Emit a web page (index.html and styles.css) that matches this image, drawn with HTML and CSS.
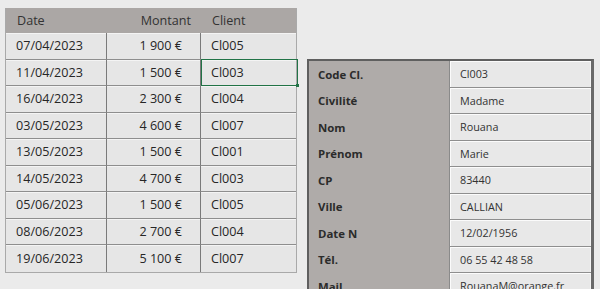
FILE: index.html
```html
<!DOCTYPE html>
<html lang="fr">
<head>
<meta charset="utf-8">
<title>Ventes et fiche client</title>
<link rel="stylesheet" href="styles.css">
</head>
<body>
<div class="sheet">
  <div class="sales">
    <div class="hd">Date</div><div class="hd num">Montant</div><div class="hd">Client</div>
    <div class="c">07/04/2023</div><div class="c num">1 900 €</div><div class="c">Cl005</div>
    <div class="c">11/04/2023</div><div class="c num">1 500 €</div><div class="c selected">Cl003</div>
    <div class="c">16/04/2023</div><div class="c num">2 300 €</div><div class="c">Cl004</div>
    <div class="c">03/05/2023</div><div class="c num">4 600 €</div><div class="c">Cl007</div>
    <div class="c">13/05/2023</div><div class="c num">1 500 €</div><div class="c">Cl001</div>
    <div class="c">14/05/2023</div><div class="c num">4 700 €</div><div class="c">Cl003</div>
    <div class="c">05/06/2023</div><div class="c num">1 500 €</div><div class="c">Cl005</div>
    <div class="c">08/06/2023</div><div class="c num">2 700 €</div><div class="c">Cl004</div>
    <div class="c">19/06/2023</div><div class="c num">5 100 €</div><div class="c">Cl007</div>
  </div>

  <div class="card">
    <div class="lbl">Code Cl.</div><div class="val">Cl003</div>
    <div class="lbl">Civilité</div><div class="val">Madame</div>
    <div class="lbl">Nom</div><div class="val">Rouana</div>
    <div class="lbl">Prénom</div><div class="val">Marie</div>
    <div class="lbl">CP</div><div class="val">83440</div>
    <div class="lbl">Ville</div><div class="val">CALLIAN</div>
    <div class="lbl">Date N</div><div class="val">12/02/1956</div>
    <div class="lbl">Tél.</div><div class="val">06 55 42 48 58</div>
    <div class="lbl">Mail</div><div class="val">RouanaM@orange.fr</div>
  </div>
</div>
</body>
</html>
```
FILE: styles.css
```css
html, body {
  margin: 0;
  padding: 0;
  background: #ebebeb;
  height: 289px;
  overflow: hidden;
}

body {
  font-family: "Open Sans", "Liberation Sans", sans-serif;
  color: #262626;
}

.sheet {
  display: flex;
  align-items: flex-start;
  padding: 8px 0 0 5px;
}

/* sales list */
.sales {
  display: grid;
  grid-template-columns: 101px 94px 95px;
  grid-template-rows: 25px repeat(9, 26.5px);
  border: 1px solid #a9a9a9;
  border-top: none;
  background: #e6e6e6;
  font-size: 12.6px;
}

.sales .hd {
  background: #aba7a5;
  color: #333;
  display: flex;
  align-items: center;
  padding-left: 11px;
}

.sales .hd.num {
  justify-content: flex-end;
  padding: 0 10px 0 0;
}

.sales .c {
  display: flex;
  align-items: center;
  padding-left: 10px;
  border-bottom: 1px solid #8e8e8e;
  box-shadow: inset 0 1px 0 #f4f4f4;
}

.sales .c:nth-child(3n+1),
.sales .c:nth-child(3n+2) {
  border-right: 1px solid #7a7a7a;
}

.sales .c:nth-last-child(-n+3) {
  border-bottom: none;
}

.sales .c.num {
  justify-content: flex-end;
  padding: 0 18px 0 0;
}

.sales .selected {
  position: relative;
}

.sales .selected::before {
  content: "";
  position: absolute;
  inset: -1px -2px -1px 0;
  border: 1px solid #217346;
}

.sales .selected::after {
  content: "";
  position: absolute;
  right: -3px;
  bottom: -2px;
  width: 3px;
  height: 3px;
  background: #217346;
}

/* client card */
.card {
  margin: 51px 0 0 10px;
  width: 282px;
  display: grid;
  grid-template-columns: 140px 1fr;
  grid-auto-rows: 26.5px;
  border: 2px solid #5f5f5f;
  border-right: 3px solid #6a6a6a;
  border-bottom: none;
  background: #afaba9;
  font-size: 10.8px;
}

.card .lbl {
  display: flex;
  align-items: center;
  padding-left: 9px;
  font-weight: 700;
  font-size: 11.4px;
  color: #2b2b2b;
}

.card .val {
  display: flex;
  align-items: center;
  padding-left: 10px;
  background: #e8e8e8;
  color: #333;
  border-left: 1px solid #8a8a8a;
  border-bottom: 1px solid #8e8e8e;
  box-shadow: inset 1px 1px 0 #fbfbfb, inset -1px 0 0 #f4f4f4;
}
```
